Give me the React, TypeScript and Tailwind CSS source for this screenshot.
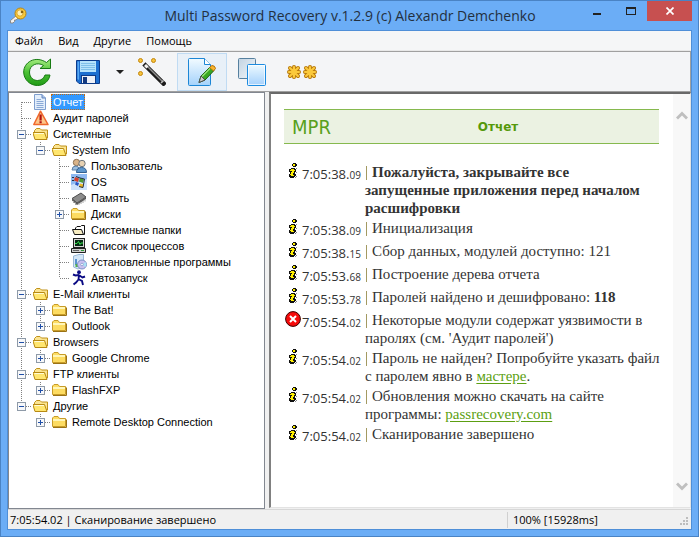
import type { ReactNode } from 'react';

/* ---------- toolbar drawings ---------- */

const KeyIcon = () => (
  <svg width="18" height="18" viewBox="0 0 18 18" aria-hidden="true">
    <path d="M8 8 L1.5 13.500 V16 H4 L5.500 14.500 V13 H7 L10 10.500" fill="#f4f4f4" stroke="#8a8a8a" />
    <circle cx="11.500" cy="6.500" r="5.500" fill="#f7c93a" stroke="#b98512" />
    <circle cx="11" cy="6" r="3.200" fill="#fff0b0" stroke="#dca62a" />
    <circle cx="13" cy="5" r="1.300" fill="#8a6410" />
  </svg>
);

const RefreshIcon = () => (
  <svg width="28" height="28" viewBox="0 0 28 28" aria-hidden="true">
    <defs>
      <linearGradient id="refresh" x1="0" y1="0" x2="0" y2="1">
        <stop offset="0" stopColor="#a5ec80" />
        <stop offset="0.5" stopColor="#4cc235" />
        <stop offset="1" stopColor="#1f9a16" />
      </linearGradient>
    </defs>
    <path
      d="M27.500 1 V10.500 H17 L20.500 7.500 C14.500 3.500 6.500 7 6.500 14 C6.500 20 11 22.500 14.500 22.500 C18.500 22.500 21 20 22 17 H27 C26 23 21 27.500 14.500 27.500 C7 27.500 .7 21.500 .7 14 C.7 4.500 12 -3 23.500 4.500 Z"
      fill="url(#refresh)"
      stroke="#177a12"
      strokeLinejoin="round"
    />
  </svg>
);

const SaveIcon = () => (
  <svg width="24" height="24" viewBox="0 0 24 24" aria-hidden="true">
    <path d="M.5 .5 H23.500 V23.500 H3 L.5 21 Z" fill="#1c6fd0" stroke="#0a3a8c" />
    <path d="M1.500 1.500 H3 V20 L1.500 19 Z" fill="#59a8f2" />
    <rect x="4" y="1" width="16" height="11" fill="#b5e2fb" />
    <path d="M5 3.500 H19 M5 5.500 H19 M5 7.500 H19 M5 9.500 H19" stroke="#7fbfe9" />
    <rect x="5.500" y="15.500" width="14" height="8" fill="#eef1f8" stroke="#0d3b89" />
    <rect x="7" y="17" width="4" height="6" fill="#143a80" />
  </svg>
);

const WandIcon = () => (
  <svg width="28" height="28" viewBox="0 0 28 28" aria-hidden="true">
    <path d="M7.500 7.500 L25.500 25.500" stroke="#1b1b1b" strokeWidth="4.500" strokeLinecap="square" />
    <path d="M8 7 L25 24" stroke="#8f8f8f" strokeWidth="1.500" />
    <path d="M6 8 L8 6 L10.500 8.500 L8.500 10.500 Z" fill="#f3f3f3" />
    <path d="M23 25 L25.500 22.500" stroke="#bdbdbd" strokeWidth="1.500" />
    <g fill="#f6c33b" stroke="#c4860c">
      <circle cx="2.500" cy="2.500" r="2" />
      <circle cx="15.500" cy="2.500" r="2" />
      <circle cx="2.500" cy="15.500" r="2" />
    </g>
  </svg>
);

const EditPageIcon = () => (
  <svg width="28" height="28" viewBox="0 0 28 28" aria-hidden="true">
    <defs>
      <linearGradient id="page" x1="0" y1="0" x2="0" y2="1">
        <stop offset="0" stopColor="#f2fbff" />
        <stop offset="1" stopColor="#a4d2fb" />
      </linearGradient>
    </defs>
    <path d="M.5 1.500 Q.5 .5 1.500 .5 H16.500 L22.500 6.500 V26.500 Q22.500 27.500 21.500 27.500 H1.500 Q.5 27.500 .5 26.500 Z" fill="url(#page)" stroke="#1c86d6" />
    <path d="M16.500 .5 V6.500 H22.500" fill="#fff" stroke="#1c86d6" />
    <path d="M11 24.500 L13 18 L22 9 L26 12.500 L17 22 Z" fill="#38a824" stroke="#1b5e12" />
    <path d="M14 18.500 L22.500 10" stroke="#95e07a" strokeWidth="1.500" />
    <path d="M11 24.500 L13 18 L17 22 Z" fill="#c9c9c9" stroke="#4d4d4d" />
    <path d="M21.500 9.500 L24 7.500 Q27 7.500 27.500 10.500 L25.500 13 Z" fill="#f7b62f" stroke="#b56f0a" />
  </svg>
);

const CopyIcon = () => (
  <svg width="28" height="28" viewBox="0 0 28 28" aria-hidden="true">
    <defs>
      <linearGradient id="back" x1="0" y1="0" x2="1" y2="1">
        <stop offset="0" stopColor="#c2d3e2" />
        <stop offset="1" stopColor="#f3f7fa" />
      </linearGradient>
      <linearGradient id="front" x1="0" y1="0" x2="0" y2="1">
        <stop offset="0" stopColor="#eefaff" />
        <stop offset="1" stopColor="#a4d0fc" />
      </linearGradient>
    </defs>
    <rect x=".5" y=".5" width="17" height="20" rx="1" fill="url(#back)" stroke="#56809f" />
    <rect x="9.500" y="6.500" width="18" height="21" rx="1" fill="url(#front)" stroke="#1c8be0" />
    <rect x="10.500" y="7.500" width="16" height="19" fill="none" stroke="#fff" opacity=".7" />
  </svg>
);

const StarsIcon = () => (
  <svg width="32" height="16" viewBox="0 0 32 16" aria-hidden="true">
    {[8, 24].map((cx) => (
      <g key={cx} transform={`translate(${cx} 8)`}>
        <path d="M0 -5 V5 M-5 0 H5 M-4 -4 L4 4 M-4 4 L4 -4" stroke="#b9790a" strokeWidth="4" strokeLinecap="round" />
        <path d="M0 -5 V5 M-5 0 H5 M-4 -4 L4 4 M-4 4 L4 -4" stroke="#fbc93c" strokeWidth="2.200" strokeLinecap="round" />
      </g>
    ))}
  </svg>
);

/* ---------- tree drawings, all 16 x 16 ---------- */

const Glyph = ({ children }: { children: ReactNode }) => (
  <svg width="16" height="16" viewBox="0 0 16 16" className="shrink-0" aria-hidden="true">
    {children}
  </svg>
);

const glyphs: Record<string, ReactNode> = {
  page: (
    <Glyph>
      <path d="M1.500 .5 H9 L12.500 4 V15.500 H1.500 Z" fill="#e3eefb" stroke="#7f9fcf" />
      <path d="M9 .5 V4 H12.500" fill="#a9c3e8" stroke="#6486bf" />
      <path d="M3.500 5.500 H8 M3.500 7.500 H10.500 M3.500 9.500 H10.500 M3.500 11.500 H10.500 M3.500 13.500 H10.500" stroke="#8aa9d6" />
    </Glyph>
  ),
  warning: (
    <Glyph>
      <path d="M7.500 1.200 L15 14.500 H.8 Z" fill="#fdc689" stroke="#f0682c" strokeWidth="1.500" strokeLinejoin="round" />
      <path d="M6.500 4.500 H8.700 V10.500 H6.500 Z M6.500 11.300 H8.700 V13.300 H6.500 Z" fill="#b00f0f" />
    </Glyph>
  ),
  open: (
    <Glyph>
      <path d="M1.500 12 V4.500 L3.500 2.500 H7 L8.500 4 H14.500 V12 Z" fill="#fbe491" stroke="#c0921a" />
      <path d="M2 13.500 L-.2 6.500 H11.500 L14 13.500 Z" fill="#ffe66f" stroke="#b88a14" />
      <path d="M1.500 7.500 H11" stroke="#fffbd6" />
    </Glyph>
  ),
  closed: (
    <Glyph>
      <path d="M.5 12.500 V4 L2 2.500 H6 L7.500 4.500 H13.500 V12.500 Z" fill="#fddc62" stroke="#c89c28" />
      <path d="M1 6 H13" stroke="#fff6b8" strokeWidth="2" />
      <path d="M1 13.500 H14.500 V5.500" fill="none" stroke="#9a7214" />
    </Glyph>
  ),
  users: (
    <Glyph>
      <circle cx="5.500" cy="4.500" r="3.200" fill="#d9b48a" stroke="#8d7355" />
      <path d="M1 12 Q1 8 5 8 Q8 8 8 12 Z" fill="#9dc0e2" stroke="#5c80a6" />
      <circle cx="11" cy="5.500" r="3.200" fill="#e7d1b2" stroke="#6c757d" />
      <path d="M5.500 14.500 Q5.500 9.500 10.500 9.500 Q15.500 9.500 15.500 14.500 Z" fill="#5d97cd" stroke="#335f8f" />
    </Glyph>
  ),
  os: (
    <Glyph>
      <rect width="16" height="16" fill="#8fbaf2" />
      <path d="M0 11 L16 5 V16 H0 Z" fill="#cfe3fb" />
      <path d="M4 3 L8 4.500 L7 8 L3 6.500 Z" fill="#d9402a" />
      <path d="M9 4 L13 5.500 L12 9 L8 7.500 Z" fill="#4d9a35" />
      <path d="M5 8 L8 9 L7 12 L4 10.500 Z" fill="#2a57c4" />
      <path d="M9 9.500 L12.500 10.500 L11.500 14 L8 12.500 Z" fill="#eeb925" />
      <path d="M1 3.500 H3 M1 6.500 H3 M5 2.500 L9 4 L13.500 5 L12 13.500 L8 12.500" fill="none" stroke="#27303f" />
    </Glyph>
  ),
  chip: (
    <Glyph>
      <path d="M1 8.500 L10 3 L15 7 L6 13 Z" fill="#8c8c8c" stroke="#4c4c4c" />
      <path d="M1 8.500 V10.500 L6 15 L15 9 V7 L6 13 Z" fill="#5a5a5a" />
      <path d="M2.500 11 V13 M4.500 12.500 V15 M8 13 V15 M10 12 V14 M12 11 V13 M14 9.500 V11.500" stroke="#a9a9a9" />
    </Glyph>
  ),
  sysfolder: (
    <Glyph>
      <path d="M4.500 6 L6 4.500 H9.500 L10.500 3.500 H13.500 V12.500 H4.500 Z" fill="#fff" stroke="#111" />
      <path d="M1.500 7.500 H10.500 L12.500 12.500 H3.500 Z" fill="#f6ecc2" stroke="#111" />
    </Glyph>
  ),
  computer: (
    <Glyph>
      <rect x="2.500" y=".5" width="11" height="9" fill="#d5d5d5" stroke="#222" />
      <rect x="4" y="2" width="8" height="6" fill="#052a12" />
      <path d="M4 5.500 H6 L7.500 3.500 L9 6.500 L10 5 H12" fill="none" stroke="#35e04c" />
      <path d="M.5 10.500 H14.500 V14.500 H.5 Z" fill="#cfcfcf" stroke="#222" />
      <path d="M2 12.500 H8" stroke="#666" />
      <path d="M10 12.500 H13" stroke="#2b9b35" />
    </Glyph>
  ),
  programs: (
    <Glyph>
      <path d="M2.500 2 L8 .5 H12.500 V12.500 L7 15 L2.500 13 Z" fill="#d3e6f7" stroke="#9ab8d6" />
      <path d="M5 5 V11" stroke="#5a92cf" strokeWidth="2" />
      <path d="M4.500 11.500 H7" stroke="#53b347" strokeWidth="3" />
      <circle cx="11" cy="10.500" r="4.500" fill="#c9bff0" stroke="#7a8fc4" />
      <path d="M11 10.500 L14.500 8 A4.500 4.500 0 0 1 14.500 13 Z" fill="#a7e1f5" />
      <circle cx="11" cy="10.500" r="1.300" fill="#fff" stroke="#7a8fc4" strokeWidth=".7" />
    </Glyph>
  ),
  runner: (
    <Glyph>
      <circle cx="8" cy="2.200" r="1.900" fill="#0a0a84" />
      <path d="M8 4.500 L7.500 10 M8 5 L4.500 5.500 L2 4.500 M8.500 5.500 L11.500 7.500 L14 6.500 M7.500 9.500 L5 12.500 L2.500 14.500 M8 9.500 L11 11 L12 15" fill="none" stroke="#0a0a84" strokeWidth="1.900" />
    </Glyph>
  ),
};

/* ---------- tree ---------- */

/* Guides, one letter per indent level:
   F first, M middle, L last, V passing line, B blank */
type Row = { guides: string; icon: string; text: string; toggle?: '+' | '-'; selected?: boolean };

const rows: Row[] = [
  { guides: 'F', icon: 'page', text: 'Отчет', selected: true },
  { guides: 'M', icon: 'warning', text: 'Аудит паролей' },
  { guides: 'M', icon: 'open', text: 'Системные', toggle: '-' },
  { guides: 'VL', icon: 'open', text: 'System Info', toggle: '-' },
  { guides: 'VBM', icon: 'users', text: 'Пользователь' },
  { guides: 'VBM', icon: 'os', text: 'OS' },
  { guides: 'VBM', icon: 'chip', text: 'Память' },
  { guides: 'VBM', icon: 'closed', text: 'Диски', toggle: '+' },
  { guides: 'VBM', icon: 'sysfolder', text: 'Системные папки' },
  { guides: 'VBM', icon: 'computer', text: 'Список процессов' },
  { guides: 'VBM', icon: 'programs', text: 'Установленные программы' },
  { guides: 'VBL', icon: 'runner', text: 'Автозапуск' },
  { guides: 'M', icon: 'open', text: 'E-Mail клиенты', toggle: '-' },
  { guides: 'VM', icon: 'closed', text: 'The Bat!', toggle: '+' },
  { guides: 'VL', icon: 'closed', text: 'Outlook', toggle: '+' },
  { guides: 'M', icon: 'open', text: 'Browsers', toggle: '-' },
  { guides: 'VL', icon: 'closed', text: 'Google Chrome', toggle: '+' },
  { guides: 'M', icon: 'open', text: 'FTP клиенты', toggle: '-' },
  { guides: 'VL', icon: 'closed', text: 'FlashFXP', toggle: '+' },
  { guides: 'L', icon: 'open', text: 'Другие', toggle: '-' },
  { guides: 'BL', icon: 'closed', text: 'Remote Desktop Connection', toggle: '+' },
];

const guidePaths: Record<string, string> = {
  F: 'M9.500 8 V16 M10 8.500 H19',
  M: 'M9.500 0 V16 M10 8.500 H19',
  L: 'M9.500 0 V8 M10 8.500 H19',
  V: 'M9.500 0 V16',
  B: '',
};

function Guide({ kind }: { kind: string }) {
  return (
    <svg width="19" height="16" viewBox="0 0 19 16" className="shrink-0" aria-hidden="true">
      <path d={guidePaths[kind]} stroke="#808080" strokeDasharray="1 1" shapeRendering="crispEdges" />
    </svg>
  );
}

function TreeRow({ row }: { row: Row }) {
  const cells = row.guides.split('');
  return (
    <li className="flex h-4 items-center whitespace-nowrap">
      {cells.map((kind, i) => (
        <span key={i} className="relative flex shrink-0">
          <Guide kind={kind} />
          {row.toggle && i === cells.length - 1 && (
            <button
              type="button"
              aria-label={`${row.toggle === '+' ? 'Развернуть' : 'Свернуть'} ${row.text}`}
              className="absolute top-1 left-[5px] flex size-[9px] items-center justify-center border border-[#8e9aa8] bg-[#f7f8fa]"
            >
              <span className="absolute h-px w-[5px] bg-[#1f4fa8]" />
              {row.toggle === '+' && <span className="absolute h-[5px] w-px bg-[#1f4fa8]" />}
            </button>
          )}
        </span>
      ))}
      <span className="ml-0.5 flex">{glyphs[row.icon]}</span>
      {row.selected ? (
        <span className="ml-0.5 border border-dotted border-[#c56a10] bg-[#3399ff] px-px leading-[14px] text-white">{row.text}</span>
      ) : (
        <span className="ml-1 leading-4">{row.text}</span>
      )}
    </li>
  );
}

/* ---------- report ---------- */

const InfoMark = () => (
  <svg width="10" height="16" viewBox="0 0 10 16" shapeRendering="crispEdges" role="img" aria-label="Информация">
    <path d="M5 0 H8 V1 H9 V3 H8 V4 H5 V3 H4 V1 H5 Z M3 5 H7 V6 H8 V9 H7 V11 H8 V13 H7 V14 H6 V15 H2 V14 H1 V11 H2 V9 H1 V6 H3 Z" fill="#111" />
    <path d="M5 1 H7 V3 H5 Z M3 6 H6 V7 H7 V8 H6 V10 H5 V12 H6 V13 H3 V12 H2 V11 H3 V9 H4 V8 H2 V7 H3 Z" fill="#ffef00" />
    <path d="M8 5 H9 V6 H8 Z M8 9 H9 V10 H8 Z M8 13 H9 V14 H8 Z M7 14 H8 V15 H7 Z" fill="#888" />
  </svg>
);

const ErrorMark = () => (
  <svg width="16" height="16" viewBox="0 0 16 16" role="img" aria-label="Ошибка">
    <circle cx="8" cy="8" r="7.400" fill="#f50a0a" stroke="#3a0000" />
    <path d="M5 5 L11 11 M11 5 L5 11" stroke="#fff" strokeWidth="2" />
  </svg>
);

const linkClass = 'text-[#5c9f12] underline underline-offset-2';

const entries: { time: string; ms: string; error?: boolean; bold?: boolean; body: ReactNode }[] = [
  { time: '7:05:38', ms: '09', bold: true, body: <>Пожалуйста, закрывайте все<br />запущенные приложения перед началом расшифровки</> },
  { time: '7:05:38', ms: '09', body: 'Инициализация' },
  { time: '7:05:38', ms: '15', body: 'Сбор данных, модулей доступно: 121' },
  { time: '7:05:53', ms: '68', body: 'Построение дерева отчета' },
  { time: '7:05:53', ms: '78', body: <>Паролей найдено и дешифровано: <b>118</b></> },
  { time: '7:05:54', ms: '02', error: true, body: "Некоторые модули содержат уязвимости в паролях (см. 'Аудит паролей')" },
  { time: '7:05:54', ms: '02', body: <>Пароль не найден? Попробуйте указать файл с паролем явно в <a href="#wizard" className={linkClass}>мастере</a>.</> },
  { time: '7:05:54', ms: '02', body: <>Обновления можно скачать на сайте программы: <a href="#site" className={linkClass}>passrecovery.com</a></> },
  { time: '7:05:54', ms: '02', body: 'Сканирование завершено' },
];

function Report() {
  return (
    <main className="min-w-0 flex-1 pt-[15px] pr-3 pl-[13px]">
      <header className="mr-0.5 flex h-[35px] items-center border-y border-[#86b94e] bg-[#ebf2e2]">
        <span className="w-[53px] shrink-0 pl-2 font-['Liberation_Sans_Narrow','DejaVu_Sans_Condensed',sans-serif] text-[20px] leading-8 text-[#58a01c]">MPR</span>
        <h1 className="flex-1 text-center font-['DejaVu_Sans',sans-serif] text-xs font-bold text-[#55990a]">Отчет</h1>
      </header>
      <ol className="mt-[19px] text-[#333]">
        {entries.map((entry, i) => (
          <li key={i} className="flex min-h-[23px] pb-0.5">
            <span className="flex w-[18px] shrink-0 justify-center">{entry.error ? <ErrorMark /> : <InfoMark />}</span>
            <time className="w-[63px] shrink-0 pt-0.5 font-['Open_Sans',sans-serif] text-[13px] leading-[18px]">
              {entry.time}.<span className="text-[10px]">{entry.ms}</span>
            </time>
            <p className={`min-w-0 flex-1 font-['Liberation_Serif',serif] text-[15px] leading-[18px] ${entry.bold ? 'font-bold' : ''}`}>
              <span className="mr-[5px] ml-px inline-block h-3.5 w-px bg-[#a39a62] align-[-3px]" />
              {entry.body}
            </p>
          </li>
        ))}
      </ol>
    </main>
  );
}

/* ---------- window ---------- */

const tool = 'flex h-[38px] items-center justify-center border border-transparent';

export default function App() {
  return (
    <div className="flex h-screen w-full flex-col border border-[#4a83c4] bg-[#6badf6] px-1.5 pb-1.5 font-['Open_Sans',sans-serif] text-[11px] text-black">
      <div className="flex h-[29px] shrink-0 items-start">
        <span className="mt-1.5 ml-0.5"><KeyIcon /></span>
        <h2 className="flex-1 pl-[84px] text-center text-[14px] leading-[30px] text-[#23303f]">Multi Password Recovery v.1.2.9 (c) Alexandr Demchenko</h2>
        <button type="button" aria-label="Свернуть окно" className="flex h-5 w-4 items-center justify-center">
          <span className="mt-1.5 h-0.5 w-2 bg-[#222]" />
        </button>
        <button type="button" aria-label="Развернуть окно" className="ml-2.5 flex h-5 w-8 items-center justify-center">
          <span className="h-2 w-2.5 border border-t-2 border-[#222]" />
        </button>
        <button type="button" aria-label="Закрыть окно" className="flex h-5 w-[45px] items-center justify-center bg-[#c75050]">
          <svg width="8" height="8" viewBox="0 0 8 8" aria-hidden="true">
            <path d="M.5 .5 L7.500 7.500 M7.500 .5 L.5 7.500" stroke="#fff" strokeWidth="1.700" />
          </svg>
        </button>
      </div>

      <div className="flex min-h-0 flex-1 flex-col border border-[#4f8fd8] bg-[#f0f0f0]">
        <nav className="flex h-5 shrink-0 items-center gap-[15px] border-b border-[#e8e8e8] bg-[#f5f6f7] px-[7px] pt-px">
          {['Файл', 'Вид', 'Другие', 'Помощь'].map((item) => (
            <button key={item} type="button">{item}</button>
          ))}
        </nav>

        <div className="flex h-[41px] shrink-0 items-center border-t border-r border-b border-[#a0a0a0] bg-[#f4f5f7] pl-[9px]">
          <button type="button" aria-label="Обновить" className={`${tool} w-10`}><RefreshIcon /></button>
          <button type="button" aria-label="Сохранить" className={`${tool} ml-[11px] w-10`}><SaveIcon /></button>
          <button type="button" aria-label="Варианты сохранения" className={`${tool} w-6`}>
            <span className="border-x-4 border-t-4 border-x-transparent border-t-[#222]" />
          </button>
          <button type="button" aria-label="Мастер" className={`${tool} w-10`}><WandIcon /></button>
          <button type="button" aria-label="Отчет" aria-pressed="true" className="ml-[5px] flex h-[38px] w-[50px] items-center justify-center border border-[#c0dbf3] bg-[#e8f0f8]"><EditPageIcon /></button>
          <button type="button" aria-label="Копировать" className={`${tool} w-[50px]`}><CopyIcon /></button>
          <button type="button" aria-label="Показать пароли" className={`${tool} w-[50px]`}><StarsIcon /></button>
        </div>

        <div className="flex min-h-0 flex-1">
          <ul className="w-[257px] shrink-0 overflow-hidden border border-[#828790] bg-white pt-px pl-[3px] font-['Liberation_Sans',Arial,sans-serif]">
            {rows.map((row) => (
              <TreeRow key={row.text + row.guides} row={row} />
            ))}
          </ul>
          <section className="mb-px ml-1 flex min-w-0 flex-1 border-t-2 border-r border-b border-l-2 border-t-[#696969] border-r-[#e3e3e3] border-b-[#e3e3e3] border-l-[#808080] bg-white">
            <Report />
            <div className="flex w-[17px] shrink-0 flex-col justify-between bg-[#f8f8f8]">
              <button type="button" aria-label="Прокрутить вверх" className="flex h-[42px] items-center justify-center">
                <svg width="12" height="9" viewBox="0 0 12 9" aria-hidden="true"><path d="M1 7.500 L6 2.500 L11 7.500" fill="none" stroke="#bfbfbf" strokeWidth="2.800" /></svg>
              </button>
              <button type="button" aria-label="Прокрутить вниз" className="flex h-[42px] items-center justify-center">
                <svg width="12" height="9" viewBox="0 0 12 9" aria-hidden="true"><path d="M1 1.500 L6 6.500 L11 1.500" fill="none" stroke="#bfbfbf" strokeWidth="2.800" /></svg>
              </button>
            </div>
          </section>
        </div>

        <footer className="flex h-5 shrink-0 items-center border-t border-[#d7d7d7] pt-px">
          <span className="flex-1 pl-0.5">7:05:54.02 | Сканирование завершено</span>
          <span className="flex h-4 w-[184px] items-center border-l border-[#d0d0d0] pl-[5px]">
            <span className="flex-1">100% [15928ms]</span>
            <svg width="12" height="12" viewBox="0 0 12 12" className="self-end" aria-hidden="true">
              <path d="M7 1 h2 v2 h-2 Z M7 4 h2 v2 h-2 Z M4 4 h2 v2 h-2 Z M7 7 h2 v2 h-2 Z M4 7 h2 v2 h-2 Z M1 7 h2 v2 h-2 Z" fill="#bdbdbd" />
            </svg>
          </span>
        </footer>
      </div>
    </div>
  );
}
